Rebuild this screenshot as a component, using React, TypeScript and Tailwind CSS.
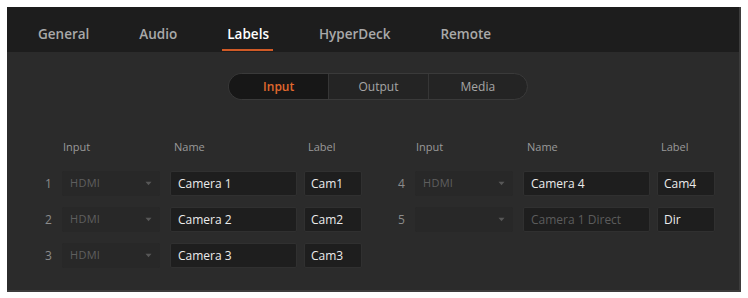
import React from 'react';

const tabs = ['General', 'Audio', 'Labels', 'HyperDeck', 'Remote'];

type Row = { n: string; src: string; name: string; label: string; dimName?: boolean };

const leftRows: Row[] = [
  { n: '1', src: 'HDMI', name: 'Camera 1', label: 'Cam1' },
  { n: '2', src: 'HDMI', name: 'Camera 2', label: 'Cam2' },
  { n: '3', src: 'HDMI', name: 'Camera 3', label: 'Cam3' },
];

const rightRows: Row[] = [
  { n: '4', src: 'HDMI', name: 'Camera 4', label: 'Cam4' },
  { n: '5', src: '', name: 'Camera 1 Direct', label: 'Dir', dimName: true },
];

function Caret() {
  return (
    <svg width="7" height="5" viewBox="0 0 7 5" className="shrink-0">
      <path d="M0.5 0.8 L6.5 0.8 L3.5 4.2 Z" fill="#575757" />
    </svg>
  );
}

function LabelRow({ row }: { row: Row }) {
  return (
    <div className="flex items-center h-[25px]">
      <div className="w-[22px] pl-[5px] text-[12px] text-[#8c8c8c]">{row.n}</div>
      <div className="w-[98px] h-full flex items-center justify-between pl-[8px] pr-[8px] bg-[#282828] rounded-[2px]">
        <span className="text-[11px] text-[#5f5f5f] tracking-wide">{row.src}</span>
        <Caret />
      </div>
      <div className="ml-[10px] w-[127px] h-full flex items-center pl-[7px] bg-[#1e1e1e] border border-[#303030] rounded-[2px]">
        <span className={row.dimName ? 'text-[12px] text-[#5c5c5c]' : 'text-[12px] text-[#ececec]'}>{row.name}</span>
      </div>
      <div className="ml-[7px] w-[58px] h-full flex items-center pl-[6px] bg-[#1e1e1e] border border-[#303030] rounded-[2px]">
        <span className="text-[12px] text-[#ececec]">{row.label}</span>
      </div>
    </div>
  );
}

function Headers() {
  return (
    <div className="flex items-center h-[16px] text-[11px] text-[#9a9a9a]">
      <div className="w-[22px]" />
      <div className="w-[98px] pl-[1px]">Input</div>
      <div className="ml-[10px] w-[127px] pl-[4px]">Name</div>
      <div className="ml-[7px] w-[58px] pl-[4px]">Label</div>
    </div>
  );
}

function Group({ rows }: { rows: Row[] }) {
  return (
    <div className="flex flex-col">
      <Headers />
      <div className="mt-[16px] flex flex-col gap-[11px]">
        {rows.map((r) => (
          <LabelRow key={r.n} row={r} />
        ))}
      </div>
    </div>
  );
}

export default function App() {
  return (
    <div className="w-[748px] h-[298px] bg-white pt-[7px] pl-[7px]" style={{ fontFamily: '"Open Sans", "Noto Sans", sans-serif' }}>
      <div className="w-[734px] h-[285px] bg-[#2b2b2b] border-r-2 border-b-2 border-[#3c3c3c] flex flex-col">
        {/* tab bar */}
        <div className="h-[45px] bg-[#1d1d1d] flex items-end pl-[31px] gap-[50px]">
          {tabs.map((t) => (
            <div key={t} className="relative h-full flex items-center pt-[10px]">
              <span className={t === 'Labels' ? 'text-[13.5px] font-semibold text-white' : 'text-[13.5px] font-semibold text-[#a9a9a9]'}>{t}</span>
              {t === 'Labels' && (
                <div className="absolute left-[-5px] right-[-4px] bottom-[1px] h-[2px] bg-[#d05a26]" />
              )}
            </div>
          ))}
        </div>

        {/* segmented control */}
        <div className="mt-[21px] ml-[221px] w-[300px] h-[27px] flex rounded-full border border-[#3a3a3a] bg-[#242424] overflow-hidden text-[12px]">
          <div className="w-[100px] flex items-center justify-center bg-[#171717] text-[#e2692e] font-semibold">Input</div>
          <div className="w-[100px] flex items-center justify-center border-l border-[#363636] text-[#a6a6a6]">Output</div>
          <div className="w-[100px] flex items-center justify-center border-l border-[#363636] text-[#a6a6a6]">Media</div>
        </div>

        {/* tables */}
        <div className="mt-[39px] pl-[33px] flex gap-[31px]">
          <Group rows={leftRows} />
          <Group rows={rightRows} />
        </div>
      </div>
    </div>
  );
}
